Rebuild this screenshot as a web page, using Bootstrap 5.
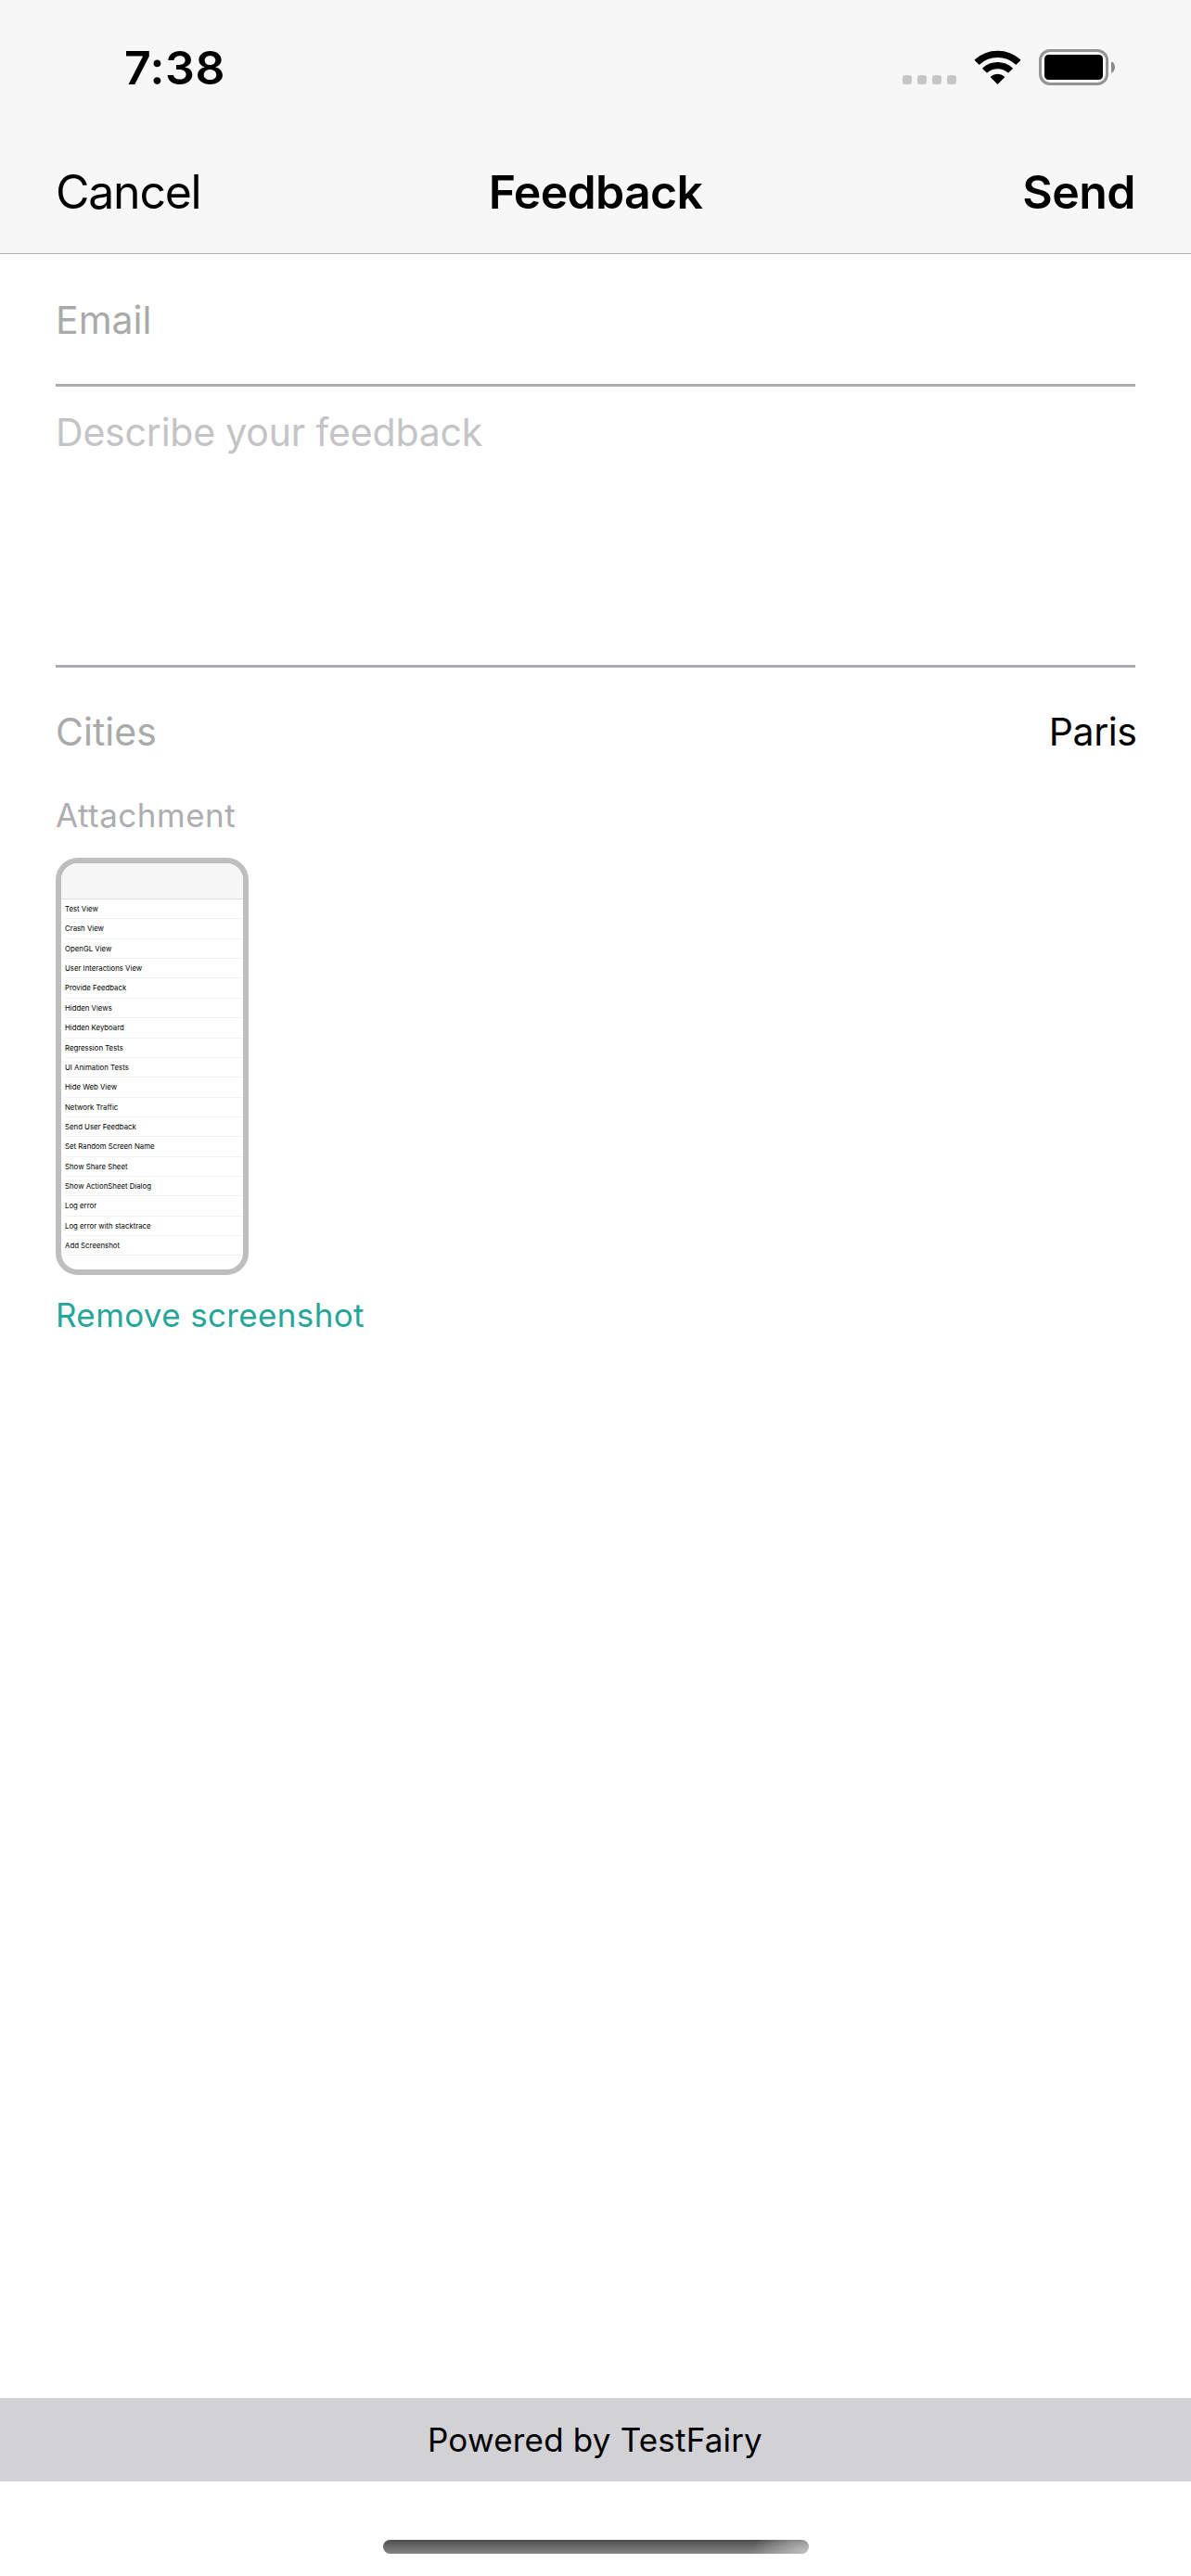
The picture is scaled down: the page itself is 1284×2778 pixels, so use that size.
<!DOCTYPE html>
<html lang="en">
<head>
<meta charset="utf-8">
<meta name="viewport" content="width=device-width, initial-scale=1">
<title>Feedback</title>
<link href="https://cdn.jsdelivr.net/npm/bootstrap@5.3.0/dist/css/bootstrap.min.css" rel="stylesheet">
<style>
  body { font-family: Inter, "Liberation Sans", sans-serif; color: #000; background: #fff; font-size: 41px; line-height: 50px; }
  .screen { height: 2778px; overflow: hidden; white-space: nowrap; }
  .top-area { height: 274px; background: #f7f7f7; border-bottom: 1px solid #b0b0b0; }
  .status-bar { height: 141px; padding: 5px 82px 0 134px; }
  .clock { font-size: 50px; font-weight: 600; letter-spacing: .5px; }
  .title-bar { height: 132px; padding: 0 60px; font-size: 50px; line-height: 60px; }
  .cancel-btn { letter-spacing: -1.25px; }
  .title-text { font-weight: 600; letter-spacing: -.7px; }
  .send-btn { font-weight: 600; letter-spacing: -.56px; }
  .form-area { padding: 0 60px; }
  .field-email { height: 143px; padding-top: 2px; border-bottom: 3px solid #acacb0; color: #aaa; }
  .field-text { height: 303px; padding-top: 24px; border-bottom: 3px solid #acacb0; color: #c4c4c6; letter-spacing: -.2px; }
  .field-cities { height: 138px; }
  .cities-label { color: #aaa; }
  .cities-value { letter-spacing: -.43px; margin-right: -1.5px; }
  .attach-label, .remove-link, .powered { font-size: 35px; line-height: 42px; }
  .attach-label { color: #aeaeb2; letter-spacing: .5px; }
  .remove-link { color: #26a69a; letter-spacing: .36px; margin-top: 22px; }
  .shot { width: 208px; height: 450px; margin-top: 25px; border: 6px solid #bebebe; border-radius: 24px; overflow: hidden; }
  .shot-head { height: 39px; background: #f6f6f6; border-bottom: 1px solid #dedede; }
  .shot-list { padding-left: 4px; font-size: 7.8px; line-height: 20.5px; }
  .shot-list > div { height: 21.37px; border-bottom: 1px solid #f1f1f1; }
  .powered { height: 90px; background: #d1d1d6; letter-spacing: .2px; padding-right: 1px; }
  .home-area { height: 102px; padding-top: 63px; }
  .home-pill { width: 459px; height: 15px; border-radius: 8px;
    background: radial-gradient(ellipse 62px 34px at 100% 100%, #c2c2c2 0%, rgba(190,190,190,0) 100%), linear-gradient(#4c4e4d, #858585); }
</style>
</head>
<body>
<main class="screen d-flex flex-column">
  <header class="top-area">
    <div class="status-bar d-flex align-items-center justify-content-between">
      <div class="clock">7:38</div>
      <svg width="232" height="42" viewBox="970 52 232 42" aria-hidden="true">
        <g fill="#c6c6c6">
          <rect x="973" y="81" width="10" height="10" rx="3"/>
          <rect x="989" y="81" width="10" height="10" rx="3"/>
          <rect x="1005" y="81" width="10" height="10" rx="3"/>
          <rect x="1021" y="81" width="10" height="10" rx="3"/>
        </g>
        <g transform="translate(1075.5 90.5)" stroke="#000" stroke-width="1.4" stroke-linejoin="round">
          <path d="M-24.1-25.7A35.6 35.6 0 0 1 24.1-25.7L19.8-21.5A29.4 29.4 0 0 0-19.8-21.5Z"/>
          <path d="M-15.6-16.8A23.2 23.2 0 0 1 15.6-16.8L11.4-12.7A17.1 17.1 0 0 0-11.4-12.7Z"/>
          <path d="M-6.9-7.4A10.4 10.4 0 0 1 6.9-7.4L0-.5Z"/>
        </g>
        <rect x="1121.5" y="54.5" width="72" height="36" rx="10.5" fill="none" stroke="#949494" stroke-width="3"/>
        <rect x="1126" y="59" width="63" height="27" rx="4.5"/>
        <path d="M1198 66.300C1203.300 68.500 1203.300 76.500 1198 78.700Z" fill="#8a8a8a"/>
      </svg>
    </div>
    <nav class="title-bar d-flex align-items-center">
      <div class="col text-start cancel-btn">Cancel</div>
      <div class="col text-center title-text">Feedback</div>
      <div class="col text-end send-btn">Send</div>
    </nav>
  </header>
  <section class="form-area flex-grow-1">
    <div class="field-email d-flex align-items-center">Email</div>
    <div class="field-text">Describe your feedback</div>
    <div class="field-cities d-flex align-items-center justify-content-between">
      <span class="cities-label">Cities</span><span class="cities-value">Paris</span>
    </div>
    <div class="attach-label">Attachment</div>
    <div class="shot">
      <div class="shot-head"></div>
      <div class="shot-list">
        <div>Test View</div>
        <div>Crash View</div>
        <div>OpenGL View</div>
        <div>User Interactions View</div>
        <div>Provide Feedback</div>
        <div>Hidden Views</div>
        <div>Hidden Keyboard</div>
        <div>Regression Tests</div>
        <div>UI Animation Tests</div>
        <div>Hide Web View</div>
        <div>Network Traffic</div>
        <div>Send User Feedback</div>
        <div>Set Random Screen Name</div>
        <div>Show Share Sheet</div>
        <div>Show ActionSheet Dialog</div>
        <div>Log error</div>
        <div>Log error with stacktrace</div>
        <div>Add Screenshot</div>
      </div>
    </div>
    <div class="remove-link">Remove screenshot</div>
  </section>
  <footer>
    <div class="powered d-flex align-items-center justify-content-center">Powered by TestFairy</div>
    <div class="home-area d-flex justify-content-center"><div class="home-pill"></div></div>
  </footer>
</main>
<script src="https://cdn.jsdelivr.net/npm/bootstrap@5.3.0/dist/js/bootstrap.bundle.min.js"></script>
</body>
</html>
